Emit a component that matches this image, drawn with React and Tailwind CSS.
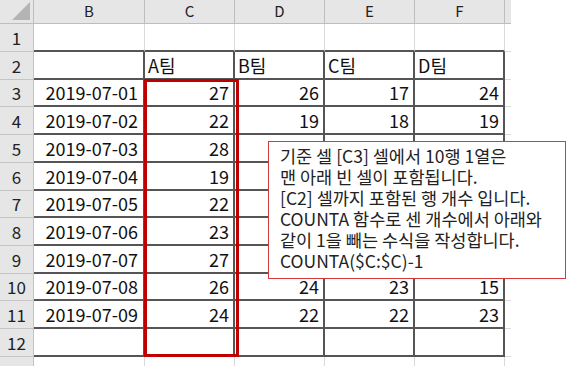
const font = { fontFamily: '"Noto Sans CJK KR", "Noto Sans", sans-serif' };

const COLS = ["B", "C", "D", "E", "F"];

// D~F values for rows 5-9 sit under the comment box, so they are left blank
const DATA = [
  ["", "", "", "", ""],
  ["", "A팀", "B팀", "C팀", "D팀"],
  ["2019-07-01", "27", "26", "17", "24"],
  ["2019-07-02", "22", "19", "18", "19"],
  ["2019-07-03", "28", "", "", ""],
  ["2019-07-04", "19", "", "", ""],
  ["2019-07-05", "22", "", "", ""],
  ["2019-07-06", "23", "", "", ""],
  ["2019-07-07", "27", "", "", ""],
  ["2019-07-08", "26", "24", "23", "15"],
  ["2019-07-09", "24", "22", "22", "23"],
  ["", "", "", "", ""],
  ["", "", "", "", ""],
];

const HeaderRow = () => (
  <>
    <div className="relative bg-[#e6e6e6] border-r border-b border-[#bdbdbd]">
      <div className="absolute right-[3px] bottom-[3px] w-0 h-0 border-l-[18px] border-l-transparent border-b-[18px] border-b-[#b4b4b4]" />
    </div>
    {COLS.map((c) => (
      <div
        key={c}
        className="flex items-center justify-center bg-[#e6e6e6] border-r border-b border-[#bdbdbd] text-[15px] text-[#222]"
      >
        {c}
      </div>
    ))}
    <div className="bg-[#e6e6e6] border-b border-[#bdbdbd]" />
  </>
);

const Cell = ({ row, col, value }) => {
  const inTable = row >= 2 && row <= 12;
  let cls = "flex items-center overflow-hidden whitespace-nowrap text-[18px] text-[#111] ";
  if (inTable) {
    cls += "border-r-2 border-b-2 border-[#555] ";
  } else if (row === 1) {
    cls += "border-r border-r-[#dadada] border-b-2 border-b-[#555] ";
  } else {
    cls += "border-r border-b border-[#dadada] ";
  }
  if (row === 2) cls += "justify-start pl-[3px]";
  else cls += col === 0 ? "justify-end pr-[5px]" : "justify-end pr-[4px]";
  return <div className={cls}>{value}</div>;
};

const App = () => {
  return (
    <div className="relative w-[567px] h-[366px] overflow-hidden bg-white" style={font}>
      <div className="grid grid-cols-[34px_111px_90px_90px_90px_90px_6px] grid-rows-[24px_28px_28px_27px_28px_28px_28px_27px_28px_28px_27px_28px_28px_28px] w-[511px]">
        <HeaderRow />
        {DATA.map((vals, i) => {
          const row = i + 1;
          return (
            <div key={row} className="contents">
              <div className="flex items-center justify-center bg-[#e6e6e6] border-r border-b border-[#c4c4c4] text-[17px] text-[#222]">
                {row}
              </div>
              {vals.map((v, j) => (
                <Cell key={j} row={row} col={j} value={v} />
              ))}
              <div className="border-b border-[#dadada]" />
            </div>
          );
        })}
      </div>

      {/* selected range C3:C12 */}
      <div className="absolute left-[144px] top-[79px] w-[95px] h-[278px] border-[3px] border-[#c00000]" />

      {/* comment */}
      <div className="absolute left-[268px] top-[141px] w-[298px] h-[138px] bg-white border border-[#d43a3a] pl-[11px] pt-[3px] text-[17.5px] leading-[21px] text-[#222] whitespace-nowrap">
        <p>기준 셀 [C3] 셀에서 10행 1열은</p>
        <p>맨 아래 빈 셀이 포함됩니다.</p>
        <p>[C2] 셀까지 포함된 행 개수 입니다.</p>
        <p>COUNTA 함수로 센 개수에서 아래와</p>
        <p>같이 1을 빼는 수식을 작성합니다.</p>
        <p>COUNTA($C:$C)-1</p>
      </div>
    </div>
  );
};

export default App;
